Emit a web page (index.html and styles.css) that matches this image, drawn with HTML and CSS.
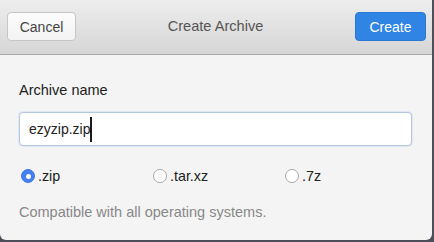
FILE: index.html
```html
<!DOCTYPE html>
<html>
<head>
<meta charset="utf-8">
<link rel="stylesheet" href="styles.css">
</head>
<body>
<div class="dialog">
  <div class="header">
    <button class="btn btn-cancel">Cancel</button>
    <div class="title">Create Archive</div>
    <button class="btn btn-create">Create</button>
  </div>
  <div class="content">
    <div class="label">Archive name</div>
    <div class="input"><span class="value">ezyzip.zip</span><span class="caret"></span></div>
    <div class="radios">
      <div class="radio-item"><span class="radio checked"></span><span class="radio-label">.zip</span></div>
      <div class="radio-item"><span class="radio"></span><span class="radio-label">.tar.xz</span></div>
      <div class="radio-item"><span class="radio"></span><span class="radio-label">.7z</span></div>
    </div>
    <div class="hint">Compatible with all operating systems.</div>
  </div>
</div>
</body>
</html>
```
FILE: styles.css
```css
html, body {
  margin: 0;
  padding: 0;
}
body {
  width: 434px;
  height: 242px;
  background: #4a4f5a;
  font-family: "Liberation Sans", Arial, sans-serif;
  overflow: hidden;
}
.dialog {
  width: 432px;
  height: 240px;
  background: #f4f4f4;
  border-radius: 0 0 6px 6px;
  overflow: hidden;
}
.header {
  box-sizing: border-box;
  border-bottom: 1px solid #a9a9a9;
  background: linear-gradient(#ededed, #d6d6d6);
  display: flex;
  align-items: flex-start;
  padding: 12px 6px 0 7px;
  height: 55px;
}
.btn {
  height: 29px;
  box-sizing: border-box;
  border-radius: 4px;
  font-family: "Liberation Sans", Arial, sans-serif;
  font-size: 14px;
  padding: 0;
  margin: 0;
}
.btn-cancel {
  width: 69px;
  background: linear-gradient(#fcfcfc, #f3f3f3);
  border: 1px solid #c6c6c6;
  color: #444;
}
.btn-create {
  width: 71px;
  background: #2f84e4;
  border: 1px solid #2b78d4;
  color: #fff;
}
.title {
  flex: 1;
  text-align: center;
  font-size: 14.6px;
  line-height: 29px;
  color: #555;
}
.content {
  padding: 27px 20px 0 19px;
}
.label {
  font-size: 14.5px;
  line-height: 17px;
  color: #222;
}
.input {
  margin-top: 13px;
  height: 34px;
  box-sizing: border-box;
  background: #fff;
  border: 1px solid #b3c7e0;
  box-shadow: 0 0 0 1px #dfe8f4;
  border-radius: 4px;
  padding-left: 9px;
  display: flex;
  align-items: center;
  font-size: 14px;
  color: #222;
}
.caret {
  width: 2px;
  height: 25px;
  background: #1a1a1a;
}
.radios {
  margin-top: 22px;
  display: grid;
  grid-template-columns: 132px 132px 1fr;
  height: 14px;
}
.radio-item {
  display: flex;
  align-items: center;
  padding-left: 2px;
}
.radio {
  width: 14px;
  height: 14px;
  box-sizing: border-box;
  border-radius: 50%;
  background: #fff;
  border: 1px solid #a9a9a9;
  display: flex;
  align-items: center;
  justify-content: center;
}
.radio.checked {
  background: #4480f2;
  border-color: #3f78e6;
}
.radio.checked::after {
  content: "";
  width: 5px;
  height: 5px;
  border-radius: 50%;
  background: #fff;
}
.radio-label {
  margin-left: 3px;
  font-size: 14.3px;
  color: #222;
}
.hint {
  margin-top: 22px;
  font-size: 14.5px;
  line-height: 17px;
  color: #888;
}
```
